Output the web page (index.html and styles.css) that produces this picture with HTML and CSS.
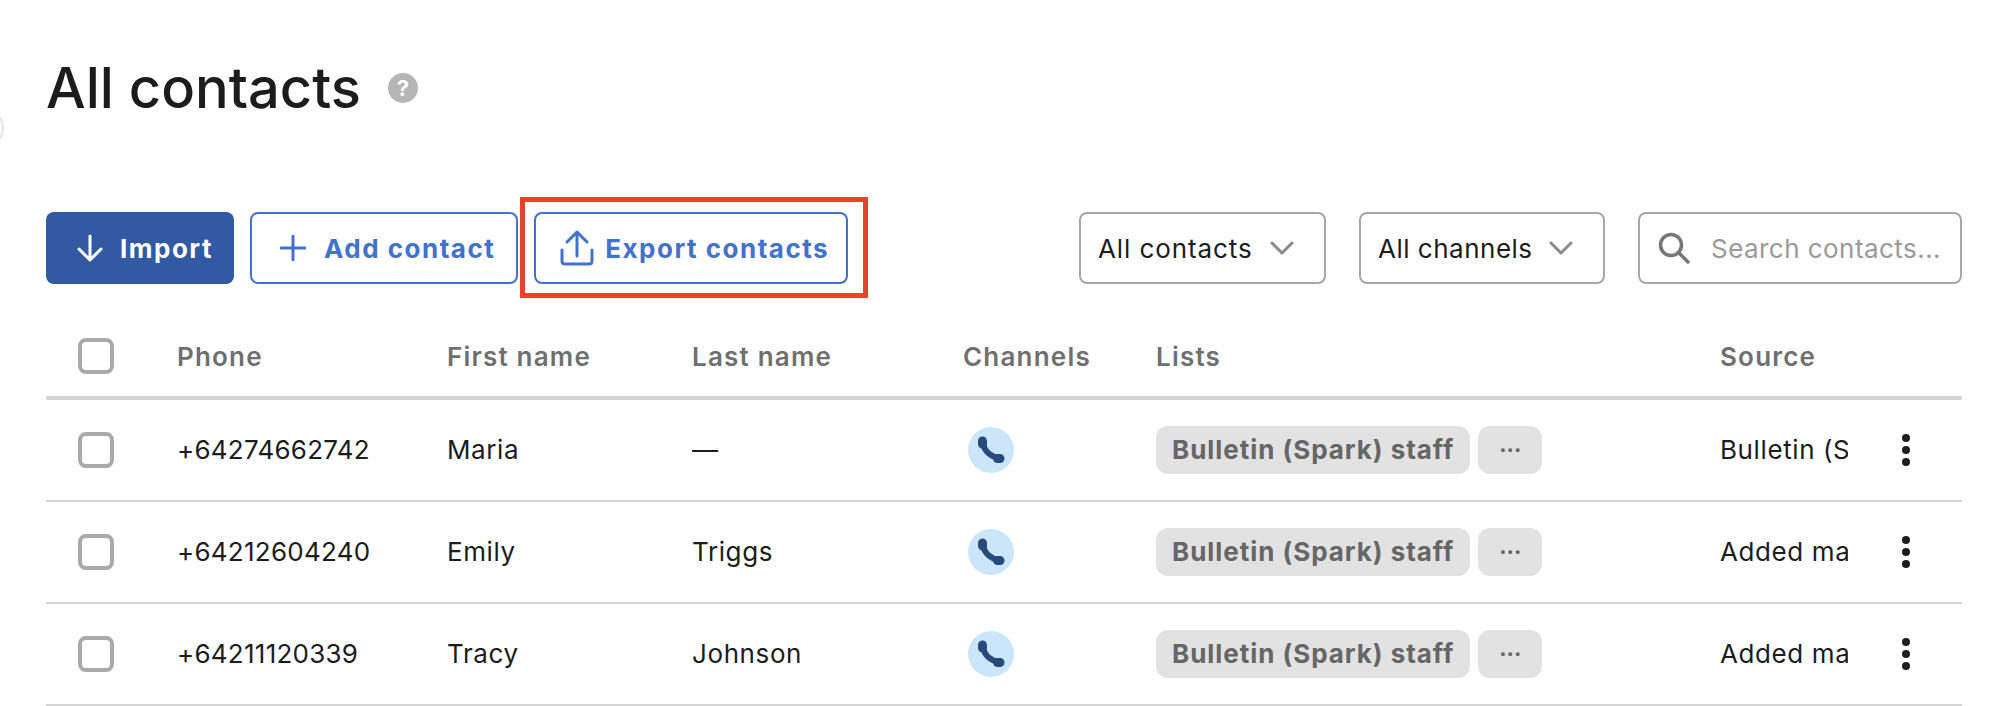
FILE: index.html
```html
<!DOCTYPE html>
<html lang="en">
<head>
    <meta charset="UTF-8">
    <meta name="viewport" content="width=device-width, initial-scale=1.0">
    <title>All contacts</title>
    <link rel="stylesheet" href="styles.css">
</head>
<body>
    <div class="nav-toggle"></div>
    <div id="container">
        <div class="title-row">
            <h1>All contacts</h1>
            <span class="help">?</span>
        </div>

        <div class="toolbar">
            <button class="btn btn-primary">
                <svg class="btn-icon" width="28" height="28" viewBox="0 0 28 28" fill="none" stroke="currentColor" stroke-width="3" stroke-linecap="round" stroke-linejoin="round"><path d="M14 2v24M3 15l11 11 11-11"/></svg>
                Import
            </button>
            <button class="btn btn-outline">
                <svg class="btn-icon" width="26" height="26" viewBox="0 0 26 26" fill="none" stroke="currentColor" stroke-width="3" stroke-linecap="round"><path d="M13 1v24M1 13h24"/></svg>
                Add contact
            </button>
            <div class="highlight-wrap">
                <button class="btn btn-outline btn-export">
                    <svg class="btn-icon" width="34" height="36" viewBox="0 0 34 36" fill="none" stroke="currentColor" stroke-width="3" stroke-linecap="round" stroke-linejoin="round"><path d="M17 2v24M7 12L17 2l10 10M2 20v11c0 2 1 3 3 3h24c2 0 3-1 3-3V20"/></svg>
                    Export contacts
                </button>
                <div class="highlight"></div>
            </div>

            <div class="filters">
                <div class="select select-contacts">
                    All contacts
                    <svg width="24" height="14" viewBox="0 0 24 14" fill="none" stroke="#8a8a8a" stroke-width="3" stroke-linecap="round" stroke-linejoin="round"><path d="M2 2l10 10L22 2"/></svg>
                </div>
                <div class="select select-channels">
                    All channels
                    <svg width="24" height="14" viewBox="0 0 24 14" fill="none" stroke="#8a8a8a" stroke-width="3" stroke-linecap="round" stroke-linejoin="round"><path d="M2 2l10 10L22 2"/></svg>
                </div>
                <div class="search">
                    <svg width="32" height="32" viewBox="0 0 32 32" fill="none" stroke="#777" stroke-width="3.500" stroke-linecap="round"><circle cx="13" cy="13" r="10.500"/><path d="M21 21l9 9"/></svg>
                    <input type="text" placeholder="Search contacts...">
                </div>
            </div>
        </div>

        <div class="row row-head">
            <div class="cell"><input type="checkbox" class="check"></div>
            <div class="cell">Phone</div>
            <div class="cell">First name</div>
            <div class="cell">Last name</div>
            <div class="cell">Channels</div>
            <div class="cell">Lists</div>
            <div class="cell">Source</div>
            <div class="cell"></div>
        </div>

        <div class="row">
            <div class="cell"><input type="checkbox" class="check"></div>
            <div class="cell val phone">+64274662742</div>
            <div class="cell val">Maria</div>
            <div class="cell val">—</div>
            <div class="cell"><span class="channel"><svg width="46" height="46" viewBox="0 0 46 46" fill="none" stroke="#254a7c" stroke-linecap="round"><path d="M15 16C16 24 23 30 31 31" stroke-width="6"/><path d="M14.500 14v3M29.500 31.500h2.500" stroke-width="9"/></svg></span></div>
            <div class="cell lists"><span class="chip">Bulletin (Spark) staff</span><span class="chip chip-more">···</span></div>
            <div class="cell val">Bulletin (Spark)</div>
            <div class="cell"><span class="kebab"><i></i><i></i><i></i></span></div>
        </div>

        <div class="row">
            <div class="cell"><input type="checkbox" class="check"></div>
            <div class="cell val phone">+64212604240</div>
            <div class="cell val">Emily</div>
            <div class="cell val">Triggs</div>
            <div class="cell"><span class="channel"><svg width="46" height="46" viewBox="0 0 46 46" fill="none" stroke="#254a7c" stroke-linecap="round"><path d="M15 16C16 24 23 30 31 31" stroke-width="6"/><path d="M14.500 14v3M29.500 31.500h2.500" stroke-width="9"/></svg></span></div>
            <div class="cell lists"><span class="chip">Bulletin (Spark) staff</span><span class="chip chip-more">···</span></div>
            <div class="cell val">Added manually</div>
            <div class="cell"><span class="kebab"><i></i><i></i><i></i></span></div>
        </div>

        <div class="row">
            <div class="cell"><input type="checkbox" class="check"></div>
            <div class="cell val phone">+64211120339</div>
            <div class="cell val">Tracy</div>
            <div class="cell val">Johnson</div>
            <div class="cell"><span class="channel"><svg width="46" height="46" viewBox="0 0 46 46" fill="none" stroke="#254a7c" stroke-linecap="round"><path d="M15 16C16 24 23 30 31 31" stroke-width="6"/><path d="M14.500 14v3M29.500 31.500h2.500" stroke-width="9"/></svg></span></div>
            <div class="cell lists"><span class="chip">Bulletin (Spark) staff</span><span class="chip chip-more">···</span></div>
            <div class="cell val">Added manually</div>
            <div class="cell"><span class="kebab"><i></i><i></i><i></i></span></div>
        </div>
    </div>
</body>
</html>
```

FILE: styles.css
```css
html, body {
    height: 706px;
    overflow: hidden;
}

body {
    font-family: Inter, "Noto Sans", sans-serif;
    font-size: 26px;
    letter-spacing: 0.6px;
    color: #1c1c1c;
    background-color: #fff;
    margin: 0;
    padding: 0;
}

#container {
    width: 1916px;
    margin-left: 46px;
}

.nav-toggle {
    position: absolute;
    left: -32px;
    top: 110px;
    width: 32px;
    height: 32px;
    border: 2px solid #dfe5e8;
    border-radius: 50%;
}

.title-row {
    display: flex;
    align-items: center;
    gap: 27px;
    height: 72px;
    padding-top: 52px;
    margin-bottom: 88px;
}

h1 {
    font-size: 56px;
    font-weight: 500;
    letter-spacing: 0;
    line-height: 72px;
    margin: 0;
}

.help {
    width: 30px;
    height: 30px;
    border-radius: 50%;
    background-color: #b5b5b5;
    color: #fff;
    font-size: 22px;
    font-weight: 700;
    line-height: 30px;
    text-align: center;
    letter-spacing: 0;
}

.toolbar {
    display: flex;
    align-items: center;
    gap: 16px;
    height: 72px;
    margin-bottom: 32px;
}

.btn {
    display: flex;
    align-items: center;
    height: 72px;
    box-sizing: border-box;
    font-family: inherit;
    font-size: 26px;
    font-weight: 700;
    letter-spacing: 1.5px;
    border-radius: 8px;
    cursor: pointer;
}

.btn-primary {
    background-color: #3259a3;
    color: #fff;
    border: none;
    gap: 16px;
    padding: 0 21px 0 30px;
}

.btn-outline {
    background-color: #fff;
    color: #4272cc;
    border: 2px solid #4272cc;
    gap: 18px;
    padding: 0 21px 0 28px;
}

.btn-export {
    gap: 11px;
    padding-left: 24px;
    padding-right: 17px;
}

.highlight-wrap {
    position: relative;
}

.highlight {
    position: absolute;
    left: -14px;
    right: -20px;
    top: -15px;
    bottom: -14px;
    border: 5px solid #e8432a;
}

.filters {
    display: flex;
    gap: 33px;
    margin-left: auto;
}

.select {
    display: flex;
    align-items: center;
    justify-content: space-between;
    box-sizing: border-box;
    height: 72px;
    padding: 0 30px 0 17px;
    border: 2px solid #a8a8a8;
    border-radius: 8px;
}

.select-contacts {
    width: 247px;
    letter-spacing: 0.9px;
}

.select-channels {
    width: 246px;
    letter-spacing: 0.5px;
}

.search {
    display: flex;
    align-items: center;
    gap: 21px;
    box-sizing: border-box;
    width: 324px;
    height: 72px;
    padding: 0 12px 0 18px;
    border: 2px solid #a8a8a8;
    border-radius: 8px;
}

.search input {
    flex: 1;
    min-width: 0;
    border: none;
    outline: none;
    padding: 0;
    font-family: inherit;
    font-size: 26px;
    letter-spacing: 0.45px;
}

.search input::placeholder {
    color: #9a9a9a;
    opacity: 1;
}

.row {
    display: grid;
    grid-template-columns: 131px 270px 245px 271px 193px 564px 128px 114px;
    align-items: center;
    height: 100px;
    border-bottom: 2px solid #d4d4d4;
}

.row-head {
    height: 80px;
    border-bottom: 4px solid #d4d4d4;
    color: #6f6f6f;
    font-weight: 600;
    letter-spacing: 1.2px;
}

.cell {
    display: flex;
    align-items: center;
    white-space: nowrap;
    overflow: hidden;
}

.val {
    padding-bottom: 2px;
}

.phone {
    letter-spacing: 0.25px;
}

.check {
    appearance: none;
    box-sizing: border-box;
    width: 36px;
    height: 36px;
    margin: 0 0 0 32px;
    border: 4px solid #aaa;
    border-radius: 8px;
    background-color: #fff;
}

.channel {
    display: block;
    width: 46px;
    height: 46px;
    margin-left: 5px;
    border-radius: 50%;
    background-color: #cbe5fa;
}

.channel svg {
    display: block;
}

.lists {
    gap: 8px;
}

.chip {
    display: block;
    height: 48px;
    padding: 0 16px;
    border-radius: 12px;
    background-color: #e2e2e2;
    color: #666;
    font-weight: 700;
    letter-spacing: 0.95px;
    line-height: 48px;
}

.chip-more {
    width: 64px;
    padding: 0;
    text-align: center;
    font-size: 22px;
    letter-spacing: 0;
}

.kebab {
    display: flex;
    flex-direction: column;
    gap: 4px;
    margin-left: 54px;
}

.kebab i {
    display: block;
    width: 8px;
    height: 8px;
    border-radius: 50%;
    background-color: #1c1c1c;
}
```
